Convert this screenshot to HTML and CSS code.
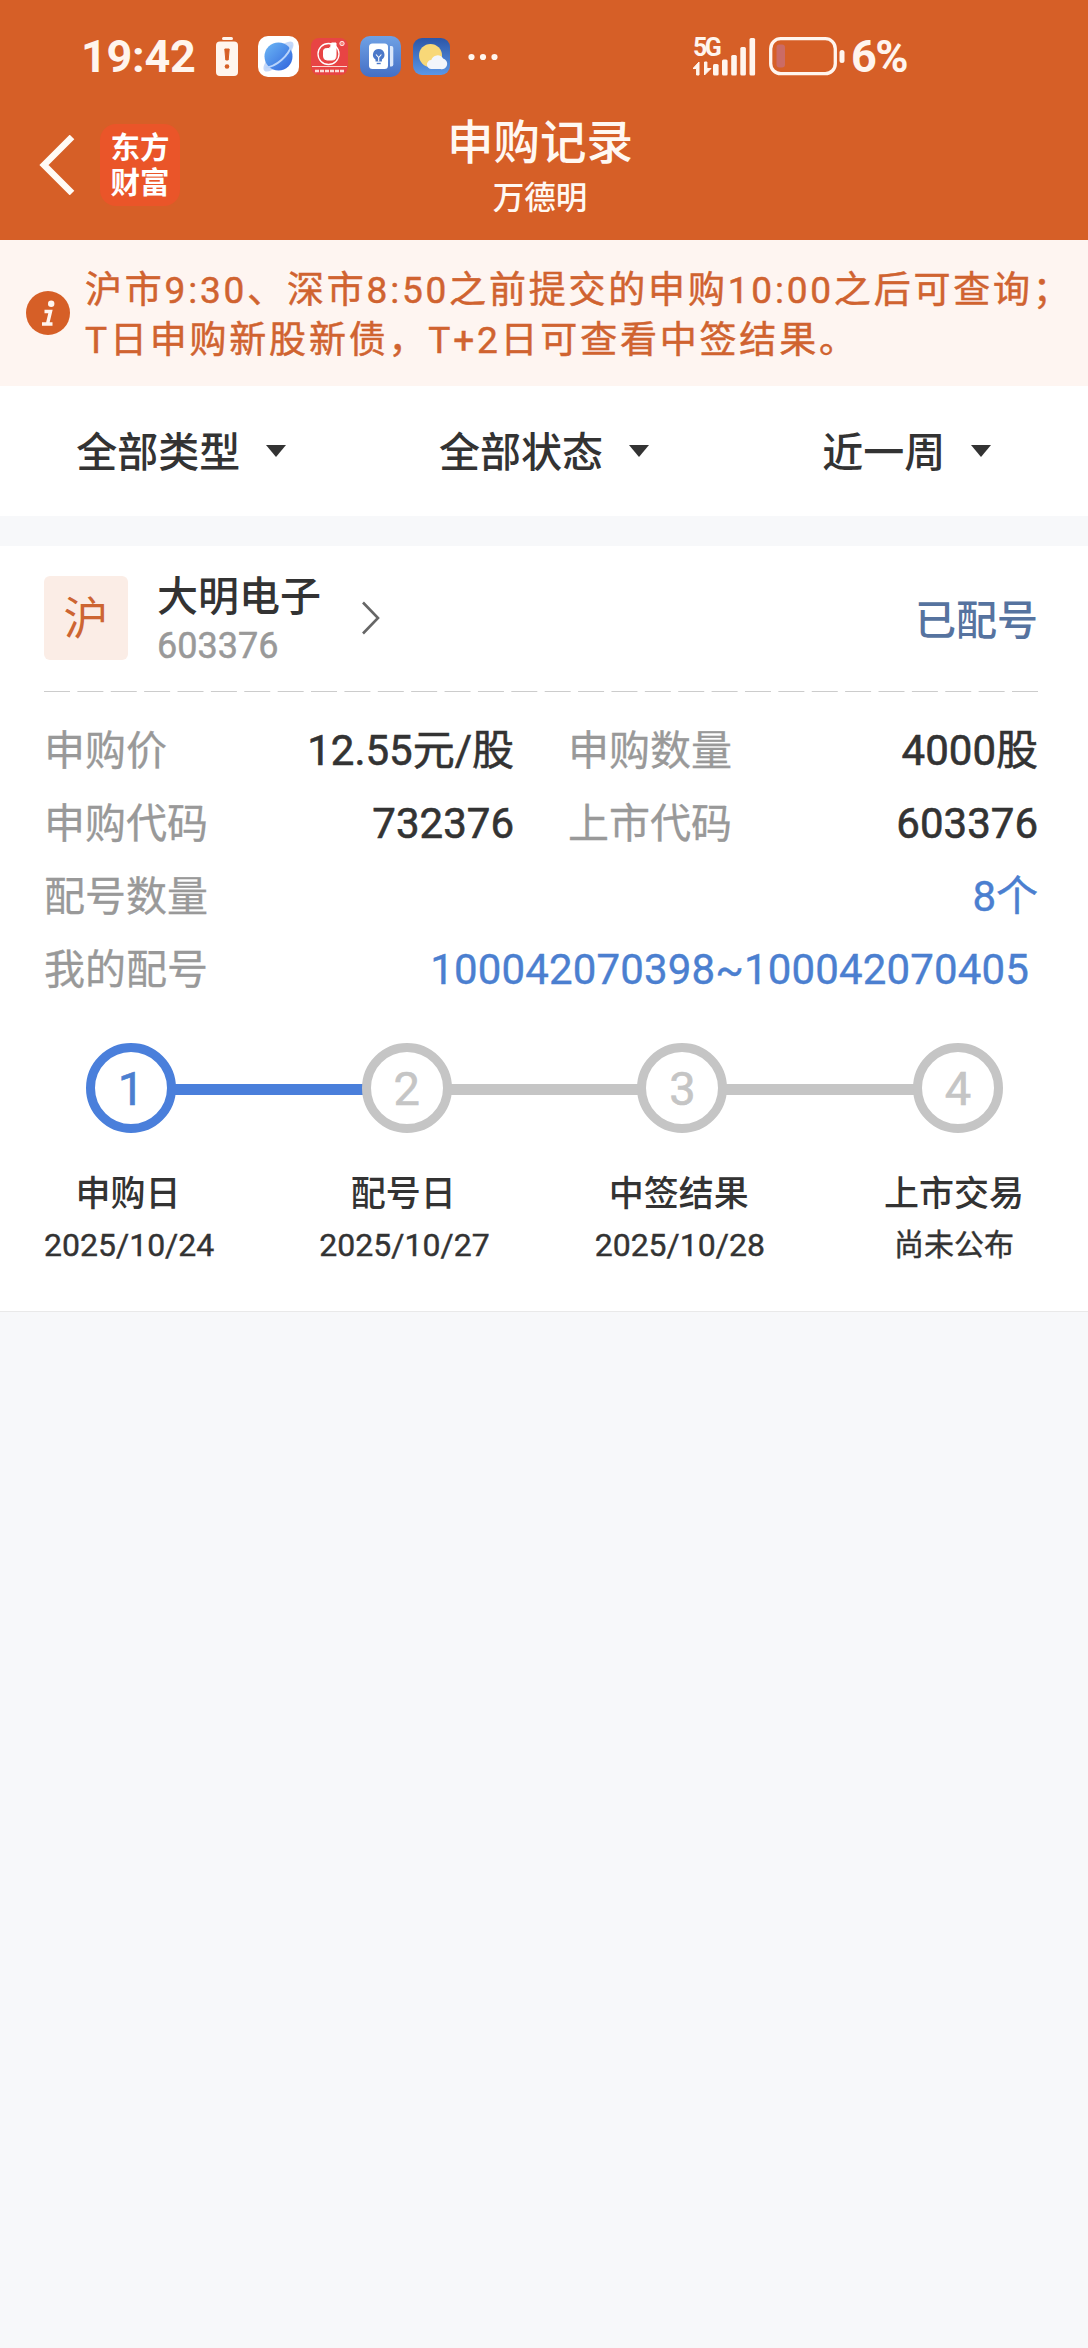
FILE: index.html
```html
<!DOCTYPE html>
<html lang="zh-CN">
<head>
	<meta charset="utf-8">
	<title>申购记录</title>
	<link rel="stylesheet" href="styles.css">
</head>
<body>
	<header class="header">
		<!-- 状态栏 -->
		<div class="status">
			<span class="clock">19:42</span>
			<svg class="s-alert" width="24" height="42" viewBox="0 0 24 42">
				<rect x="7" y="1" width="11" height="3" rx="1.500" fill="#fff5ee"/>
				<rect x="1" y="5.500" width="22" height="34.500" rx="4" fill="#fff5ee"/>
				<path d="M9.800 13h4.400l-1 11h-2.400z" fill="#d65f27" stroke="#d65f27" stroke-linejoin="round"/>
				<circle cx="12" cy="30.500" r="2.300" fill="#d65f27"/>
			</svg>
			<svg class="s-planet" width="41" height="41" viewBox="0 0 41 41">
				<defs>
					<linearGradient id="gPlanet" x1="0" y1="0" x2="1" y2="1"><stop offset="0" stop-color="#6db8f5"/><stop offset="1" stop-color="#2f62dc"/></linearGradient>
				</defs>
				<rect width="41" height="41" rx="10" fill="#fff"/>
				<ellipse cx="20.500" cy="20.500" rx="20" ry="7" transform="rotate(-45 20.500 20.500)" fill="#c6d8f8"/>
				<circle cx="20.500" cy="20.500" r="14" fill="url(#gPlanet)"/>
				<path d="M7.500 31.500C18 31 31 19.500 33.500 9" fill="none" stroke="#b9d4fb" stroke-width="2"/>
			</svg>
			<svg class="s-red" width="37" height="37" viewBox="0 0 37 37">
				<rect width="37" height="37" rx="8" fill="#e84444"/>
				<circle cx="17.500" cy="16" r="10.500" fill="none" stroke="#fff" stroke-width="1.300"/>
				<path d="M12.500 13q0-2.500 3-2.500h2.500q2-1 2.500-5.500h4.500v12.500q0 4.500-4 4.500h-5q-3.500 0-3.500-4z" fill="#fff" stroke="#fff" stroke-linejoin="round"/>
				<circle cx="31" cy="5.500" r="2.200" fill="#f58a80" stroke="#fff" stroke-width=".8"/>
				<path d="M1 28.500h35" stroke="#fbd5d0"/>
				<path d="M4 33h29" stroke="#fbdcd8" stroke-width="2.500" stroke-dasharray="4 1"/>
			</svg>
			<svg class="s-lamp" width="41" height="41" viewBox="0 0 41 41">
				<defs>
					<linearGradient id="gLamp" x1="0" y1="0" x2="0" y2="1"><stop offset="0" stop-color="#6fa1e4"/><stop offset="1" stop-color="#446fc6"/></linearGradient>
				</defs>
				<rect width="41" height="41" rx="10" fill="url(#gLamp)"/>
				<rect x="9" y="7.500" width="19" height="25.500" rx="3.500" fill="#fff"/>
				<path d="M30 10h1.500q1.800 0 1.800 2v16.500q0 2-1.800 2H30z" fill="#dbe7fa"/>
				<path d="M18.700 13a5.800 5.800 0 0 0-3.200 10.600v2h6.400v-2A5.800 5.800 0 0 0 18.700 13z" fill="#4b78c9"/>
				<path d="M16 18.500l2.700 3 2.700-3M18.700 21.500v4" fill="none" stroke="#fff" stroke-width="1.100"/>
				<path d="M16.700 27.500h4" stroke="#4b78c9" stroke-width="1.400"/>
			</svg>
			<svg class="s-weather" width="37" height="37" viewBox="0 0 37 37">
				<defs>
					<linearGradient id="gSky" x1="0" y1="0" x2="0" y2="1"><stop offset="0" stop-color="#2c56a8"/><stop offset="1" stop-color="#5b97e6"/></linearGradient>
				</defs>
				<rect width="37" height="37" rx="9" fill="url(#gSky)"/>
				<circle cx="17.500" cy="17.500" r="11.500" fill="#f8d878"/>
				<path d="M18.500 31a4.500 4.500 0 0 1-.2-9 6.500 6.500 0 0 1 11.800-1.500A5.300 5.300 0 0 1 27.500 31z" fill="#f2f5fb"/>
			</svg>
			<svg class="s-dots" width="30" height="8" viewBox="0 0 30 8">
				<g fill="#fff5ee"><circle cx="3.500" cy="4" r="3.100"/><circle cx="15" cy="4" r="3.100"/><circle cx="26.500" cy="4" r="3.100"/></g>
			</svg>
			<div class="s-signal">
				<span class="net">5G</span>
				<svg width="64" height="40" viewBox="0 0 64 40">
					<path d="M0 31.500L6 25v13H3.600v-6.500zM18 31.500L11.500 38V25h2.400v6.500z" fill="#fff5ee" stroke="#fff5ee" stroke-linejoin="round"/>
					<g fill="#fff5ee">
						<rect x="20" y="27" width="5.600" height="11.500" rx="1.500"/>
						<rect x="29" y="22.500" width="5.600" height="16" rx="1.500"/>
						<rect x="38.200" y="18" width="5.600" height="20.500" rx="1.500"/>
						<rect x="47.300" y="10" width="5.600" height="28.500" rx="1.500"/>
						<rect x="56.500" y="1" width="5.600" height="37.500" rx="1.500"/>
					</g>
				</svg>
			</div>
			<svg class="s-battery" width="77" height="39" viewBox="0 0 77 39">
				<rect x="1.700" y="1.700" width="64.600" height="35" rx="10" fill="none" stroke="#fff5ee" stroke-width="3.300"/>
				<rect x="7.500" y="7.500" width="8.500" height="23" rx="3" fill="#cb6b65"/>
				<rect x="70.500" y="13" width="5" height="13" rx="2.500" fill="#fff5ee"/>
			</svg>
			<span class="percent">6%</span>
		</div>

		<!-- 导航栏 -->
		<div class="nav">
			<div class="nav-left">
				<svg class="back" width="36" height="60" viewBox="0 0 36 60">
					<path d="M33 2L5 30L33 58" fill="none" stroke="#fffaf5" stroke-width="6.500"/>
				</svg>
				<div class="logo">东方<br>财富</div>
			</div>
			<div class="nav-title">
				<h1>申购记录</h1>
				<p>万德明</p>
			</div>
		</div>
	</header>

	<section class="notice">
		<svg class="info" width="44" height="44" viewBox="0 0 44 44">
			<circle cx="22" cy="22" r="22" fill="#d65f27"/>
			<circle cx="25.200" cy="12.800" r="3.200" fill="#fff5f0"/>
			<path d="M18.500 20.500h6l-3 12.500M16 33h10.500" fill="none" stroke="#fff5f0" stroke-width="3.400"/>
		</svg>
		<p>沪市9:30、深市8:50之前提交的申购10:00之后可查询；<br>T日申购新股新债，T+2日可查看中签结果。</p>
	</section>

	<nav class="filter">
		<div class="filter-item"><span>全部类型</span><i></i></div>
		<div class="filter-item"><span>全部状态</span><i></i></div>
		<div class="filter-item"><span>近一周</span><i></i></div>
	</nav>

	<section class="card">
		<div class="stock">
			<span class="market">沪</span>
			<div class="stock-name">
				<h2>大明电子</h2>
				<p>603376</p>
			</div>
			<svg class="arrow" width="20" height="34" viewBox="0 0 20 34">
				<path d="M2 1.500L17 17L2 32.500" fill="none" stroke="#666" stroke-width="2.600"/>
			</svg>
			<span class="state">已配号</span>
		</div>
		<svg class="dash" width="994" height="1" viewBox="0 0 994 1">
			<path d="M0 .5h994" stroke="#ccc" stroke-dasharray="26 7.380"/>
		</svg>

		<div class="info-grid">
			<div class="cell"><label>申购价</label><b>12.55元/股</b></div>
			<div class="cell"><label>申购数量</label><b>4000股</b></div>
			<div class="cell"><label>申购代码</label><b>732376</b></div>
			<div class="cell"><label>上市代码</label><b>603376</b></div>
			<div class="cell wide"><label>配号数量</label><b class="blue">8个</b></div>
			<div class="cell wide"><label>我的配号</label><b class="blue range">100042070398~100042070405</b></div>
		</div>

		<!-- 申购进度 -->
		<div class="track">
			<span class="dot on">1</span><i class="on"></i>
			<span class="dot">2</span><i></i>
			<span class="dot">3</span><i></i>
			<span class="dot">4</span>
		</div>
		<div class="steps">
			<div class="step"><h3>申购日</h3><p>2025/10/24</p></div>
			<div class="step"><h3>配号日</h3><p>2025/10/27</p></div>
			<div class="step"><h3>中签结果</h3><p>2025/10/28</p></div>
			<div class="step"><h3>上市交易</h3><p class="cn">尚未公布</p></div>
		</div>
	</section>
</body>
</html>
```
FILE: styles.css
```css
* {
	box-sizing: border-box;
}
body {
	margin: 0;
	min-height: 2348px;
	background: #f7f8fa;
	color: #333;
	font-family: Roboto, "Noto Sans CJK SC", sans-serif;
	font-size: 41px;
}
h1, h2, h3, p {
	margin: 0;
	font-weight: 500;
}
svg {
	display: block;
	flex: none;
}

/* 顶部 */
.header {
	height: 240px;
	background: #d65f27;
	color: #fff8f2;
}
.status {
	display: flex;
	align-items: center;
	height: 113px;
	padding-left: 81px;
}
.clock, .percent {
	color: #fff5ee;
	font-size: 45px;
	font-weight: 700;
	line-height: 54px;
}
.clock {
	width: 134px;
	letter-spacing: -.3px;
}
.s-planet {
	margin-left: 19px;
}
.s-red, .s-lamp, .s-weather {
	margin-left: 12px;
}
.s-dots {
	margin-left: 18px;
}
.s-signal {
	position: relative;
	margin-left: 195px;
}
.net {
	position: absolute;
	left: 0;
	top: -6px;
	color: #fff5ee;
	font-size: 25px;
	font-weight: 700;
	line-height: 34px;
	letter-spacing: -2.5px;
}
.s-battery {
	margin-left: 12px;
}
.percent {
	margin-left: 5px;
	letter-spacing: -1.5px;
}

.nav {
	position: relative;
	height: 127px;
}
.nav-left {
	display: flex;
	align-items: center;
	padding: 11px 0 0 39px;
}
.logo {
	width: 80px;
	height: 82px;
	margin-left: 25px;
	padding-top: 7px;
	border-radius: 16px;
	background: #ea5529;
	color: #fff;
	font-size: 29.5px;
	font-weight: 700;
	line-height: 34.5px;
	text-align: center;
}
.nav-title {
	position: absolute;
	left: 400px;
	top: 1px;
	width: 280px;
	text-align: center;
}
.nav-title h1 {
	font-size: 46.5px;
	line-height: 58px;
}
.nav-title p {
	font-size: 31.5px;
	line-height: 53px;
}

/* 提示 */
.notice {
	display: flex;
	align-items: center;
	height: 146px;
	padding-left: 26px;
	background: #fef5f1;
	color: #d06330;
}
.notice p {
	margin-left: 15px;
	padding-top: 5px;
	font-size: 37px;
	font-weight: 400;
	line-height: 50px;
	letter-spacing: 2.8px;
	white-space: nowrap;
	-webkit-text-stroke: .5px;
}

/* 筛选 */
.filter {
	display: grid;
	grid-template-columns: repeat(3, 1fr);
	height: 130px;
	background: #fff;
}
.filter-item {
	display: flex;
	align-items: center;
	justify-content: center;
	font-weight: 500;
}
.filter-item span {
	padding-bottom: 4px;
}
.filter-item i {
	margin-left: 26px;
	border: 10px solid transparent;
	border-top: 12px solid #333;
	border-bottom: 0;
}

/* 记录卡片 */
.card {
	height: 766px;
	margin-top: 30px;
	padding: 30px 50px 0 44px;
	background: #fff;
	border-bottom: 1px solid #e9e9e9;
}
.stock {
	display: flex;
	align-items: center;
	height: 84px;
}
.market {
	width: 84px;
	height: 84px;
	border-radius: 6px;
	background: #fbede6;
	color: #cd6532;
	font-size: 45px;
	line-height: 87px;
	text-align: center;
}
.stock-name {
	width: 204px;
	margin-left: 29px;
}
.stock-name h2 {
	padding-top: 5px;
	font-size: 41px;
	line-height: 50px;
}
.stock-name p {
	color: #999;
	font-size: 36px;
	font-weight: 400;
	line-height: 48px;
	-webkit-text-stroke: .5px;
}
.state {
	margin-left: auto;
	padding-bottom: 3px;
	color: #56739f;
	font-weight: 500;
}
.dash {
	margin-top: 31px;
}
.info-grid {
	display: grid;
	grid-template-columns: 470px 470px;
	column-gap: 54px;
	margin-top: 22px;
}
.cell {
	display: flex;
	justify-content: space-between;
	height: 73px;
	line-height: 73px;
}
.cell label {
	padding-top: 1px;
	color: #999;
	-webkit-text-stroke: .3px;
}
.cell b {
	font-weight: 400;
	font-size: 42px;
	-webkit-text-stroke: .6px;
}
.cell .blue {
	color: #4b7fd0;
	-webkit-text-stroke: .4px;
}
.cell .range {
	padding-right: 9px;
	letter-spacing: .15px;
}
.wide {
	grid-column: span 2;
}

/* 进度条 */
.track {
	display: flex;
	align-items: center;
	margin-top: 37px;
	padding: 0 35px 0 42px;
}
.track i {
	flex: 1;
	height: 11px;
	margin: 2px -2px 0;
	background: #c5c5c5;
}
.dot {
	width: 90px;
	height: 90px;
	border: 9px solid #c5c5c5;
	border-radius: 50%;
	color: #c5c5c5;
	font-size: 47px;
	line-height: 74px;
	text-align: center;
	-webkit-text-stroke: .6px;
}
.track .dot.on {
	border-color: #4a7fdb;
	color: #4b7fd0;
}
.track i.on {
	background: #4a7fdb;
}
.steps {
	display: flex;
	justify-content: space-between;
	margin-top: 37px;
}
.step {
	width: 168px;
	text-align: center;
	white-space: nowrap;
}
.step h3 {
	font-size: 35px;
	line-height: 50px;
}
.step p {
	font-size: 32px;
	font-weight: 400;
	line-height: 50px;
	-webkit-text-stroke: .4px;
}
.step .cn {
	font-size: 30px;
}
```
